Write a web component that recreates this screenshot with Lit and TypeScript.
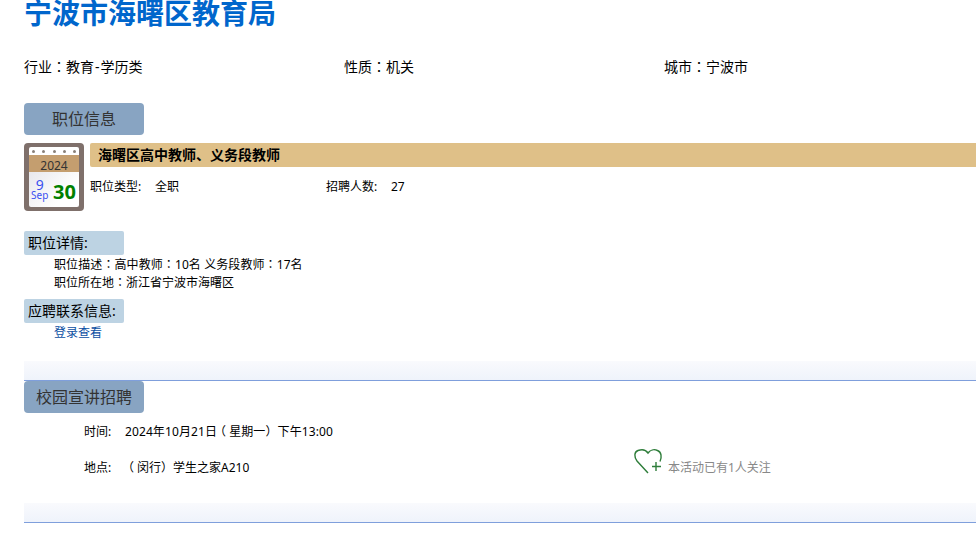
import { LitElement, html, css } from "lit";
import { customElement } from "lit/decorators.js";

@customElement("app-root")
export class AppRoot extends LitElement {
  static styles = css`
    :host {
      display: block;
      width: 976px;
      height: 549px;
      overflow: hidden;
      background: #fff;
      font-family: "Noto Sans", "Noto Sans CJK SC", sans-serif;
      font-size: 12px;
      color: #000;
      box-sizing: border-box;
      padding-left: 24px;
    }
    .c { font-family: "Noto Sans CJK TC", sans-serif; line-height: 0; }
    .open, .close {
      display: inline-block;
      line-height: 0;
    }
    .open { transform: translateX(-3px); }
    .hy { padding: 0 1px; }
    .title {
      margin: -3px 0 0;
      font-size: 28px;
      line-height: 32px;
      font-weight: 700;
      color: #0066cc;
    }
    .facts {
      display: grid;
      grid-template-columns: 320px 320px 1fr;
      margin-top: 28px;
      font-size: 14px;
      line-height: 20px;
    }
    .tab {
      width: 120px;
      height: 32px;
      line-height: 32px;
      text-align: center;
      font-size: 16px;
      color: #333;
      background: #88a4c2;
      border-radius: 4px;
    }
    .tab.job { margin-top: 26px; }
    .job-row {
      display: flex;
      gap: 6px;
      margin-top: 8px;
    }
    .cal {
      width: 60px;
      height: 68px;
      flex: none;
      box-sizing: border-box;
      padding: 4px 5px;
      background: #7f706b;
      border-radius: 4px;
      display: flex;
      flex-direction: column;
    }
    .dots {
      height: 8px;
      background: #fff;
      border-radius: 2px 2px 0 0;
      display: flex;
      justify-content: space-between;
      align-items: center;
      padding: 0 3px;
    }
    .dots i {
      width: 3px;
      height: 3px;
      border-radius: 50%;
      background: #8a8078;
    }
    .year {
      height: 17px;
      background: #c49e6f;
      text-align: center;
      font: 12px/21px "Noto Sans", sans-serif;
      color: #333;
    }
    .day {
      flex: 1;
      background: linear-gradient(135deg, #e8e8ec, #fff 70%);
      border-radius: 0 0 2px 2px;
      display: flex;
      align-items: center;
      justify-content: space-between;
      padding: 0 0 0 2px;
    }
    .md {
      display: flex;
      flex-direction: column;
      align-items: center;
      color: #3a50f0;
      font-family: "Noto Sans", sans-serif;
      margin-bottom: 5px;
    }
    .md b {
      font-weight: 400;
      font-size: 14px;
      line-height: 12px;
      margin-top: 5px;
    }
    .md span {
      font-size: 10px;
      line-height: 9px;
    }
    .dd {
      font: 700 20px/24px "Noto Sans", sans-serif;
      color: #008000;
      margin: 5px 3px 0 0;
    }
    .job-main { flex: 1; }
    .job-name {
      height: 24px;
      line-height: 24px;
      background: #dfc088;
      border-radius: 2px 0 0 2px;
      padding-left: 8px;
      font-size: 14px;
      font-weight: 700;
    }
    .job-meta {
      display: flex;
      margin-top: 11px;
      line-height: 18px;
    }
    .job-meta span:nth-child(1) { width: 65px; }
    .job-meta span:nth-child(2) { width: 171px; }
    .job-meta span:nth-child(3) { width: 65px; }
    .label {
      width: 100px;
      height: 24px;
      line-height: 24px;
      box-sizing: border-box;
      padding-left: 4px;
      background: #bdd3e3;
      border-radius: 2px;
      font-size: 14px;
    }
    .label.first { margin-top: 20px; }
    .label.second { margin-top: 7px; }
    .body {
      padding: 1px 0 0 30px;
      line-height: 18px;
    }
    .desc { letter-spacing: 0.09px; }
    .body a {
      color: #0b4ea2;
      text-decoration: none;
      display: block;
    }
    .band {
      height: 19px;
      background: linear-gradient(#f9fafd, #eff3fb);
      border-bottom: 1px solid #7f9fdc;
    }
    .band.one { margin-top: 19px; }
    .band.two { margin-top: 27px; }
    .talk-rows {
      padding-left: 60px;
      display: flex;
      flex-direction: column;
    }
    .row {
      display: grid;
      grid-template-columns: 41px 508px auto;
      align-items: center;
      height: 18px;
    }
    .row.time { margin-top: 9px; }
    .row.place { margin-top: 18px; }
    .date { letter-spacing: 0.1px; }
    .follow {
      display: flex;
      align-items: center;
      gap: 5px;
      color: #888;
      height: 18px;
    }
    .follow svg {
      width: 30px;
      height: 28px;
      flex: none;
      margin: -11px 0 1px;
    }
  `;

  render() {
    return html`
      <h1 class="title">宁波市海曙区教育局</h1>
      <div class="facts">
        <span>行业<span class="c">：</span>教育<span class="hy">-</span>学历类</span>
        <span>性质<span class="c">：</span>机关</span>
        <span>城市<span class="c">：</span>宁波市</span>
      </div>
      <div class="tab job">职位信息</div>
      <div class="job-row">
        <div class="cal">
          <div class="dots"><i></i><i></i><i></i><i></i><i></i></div>
          <div class="year">2024</div>
          <div class="day">
            <div class="md"><b>9</b><span>Sep</span></div>
            <div class="dd">30</div>
          </div>
        </div>
        <div class="job-main">
          <div class="job-name">海曙区高中教师、义务段教师</div>
          <div class="job-meta">
            <span>职位类型:</span><span>全职</span><span>招聘人数:</span><span>27</span>
          </div>
        </div>
      </div>
      <div class="label first">职位详情:</div>
      <div class="body">
        <div class="desc">职位描述<span class="c">：</span>高中教师<span class="c">：</span>10名 义务段教师<span class="c">：</span>17名</div>
        <div>职位所在地<span class="c">：</span>浙江省宁波市海曙区</div>
      </div>
      <div class="label second">应聘联系信息:</div>
      <div class="body"><a href="#">登录查看</a></div>
      <div class="band one"></div>
      <div class="tab">校园宣讲招聘</div>
      <div class="talk-rows">
        <div class="row time">
          <span>时间:</span>
          <span class="date">2024年10月21日<span class="open">（</span>星期一<span class="close">）</span>下午13:00</span>
        </div>
        <div class="row place">
          <span>地点:</span>
          <span><span class="open">（</span>闵行<span class="close">）</span>学生之家A210</span>
          <div class="follow">
            <svg viewBox="0 0 30 28" fill="none" stroke="#2e7d3a" stroke-width="1.4">
              <path d="M15 26 L4 14 C1 10 1 5 5 3.5 C9 2 13 3 15 6 C17 3 21 2 24.5 3.5 C28.5 5 29 10 27 14.5" />
              <path d="M23 15 V24 M19 19.5 H28" />
            </svg>
            <span>本活动已有1人关注</span>
          </div>
        </div>
      </div>
      <div class="band two"></div>
    `;
  }
}
